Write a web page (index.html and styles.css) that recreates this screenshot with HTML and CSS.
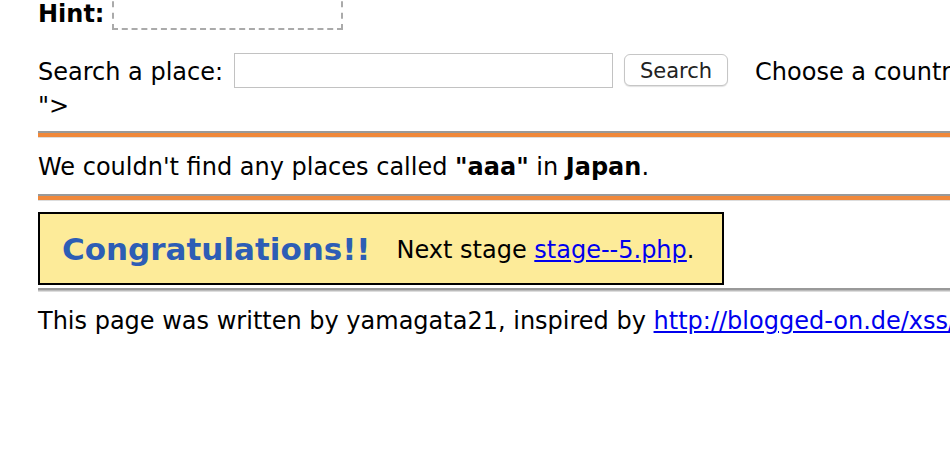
FILE: index.html
```html
<!DOCTYPE html>
<html>
<head>
<meta charset="utf-8">
<link rel="stylesheet" href="styles.css">
</head>
<body>
<div class="page">
  <div class="hint-row"><b class="hint-label">Hint:</b><span class="hint-box"></span></div>
  <form class="search-row">
    <span class="label">Search a place:</span>
    <input class="search-input" type="text">
    <button class="search-btn" type="button">Search</button>
    <span class="label country">Choose a country:</span>
  </form>
  <div class="stray">"&gt;</div>
  <hr class="rule-orange">
  <p class="result">We couldn't find any places called <b>"aaa"</b> in <b>Japan</b>.</p>
  <hr class="rule-orange">
  <div class="congrats"><span class="congrats-title">Congratulations!!</span><span class="congrats-next">Next stage <a href="#">stage--5.php</a>.</span></div>
  <hr class="rule-gray">
  <p class="footer">This page was written by yamagata21, inspired by <a href="#">http://blogged-on.de/xss/</a></p>
</div>
</body>
</html>
```
FILE: styles.css
```css
html, body {
  margin: 0;
  padding: 0;
  background: #fff;
  overflow: hidden;
}
body {
  width: 950px;
  height: 460px;
  font-family: "DejaVu Sans", Verdana, sans-serif;
  font-size: 24px;
  color: #000;
}
.page {
  padding-left: 38px;
  white-space: nowrap;
}
.hint-row {
  display: flex;
  align-items: flex-end;
  height: 30px;
}
.hint-label {
  padding-bottom: 2px;
  line-height: 28px;
}
.hint-box {
  display: inline-block;
  flex-shrink: 0;
  width: 231px;
  height: 40px;
  margin-left: 8px;
  border: 2px dashed #aaa;
  border-top: none;
  box-sizing: border-box;
}
.search-row {
  display: flex;
  align-items: center;
  height: 36px;
  margin: 22px 0 0;
}
.search-row > * {
  flex-shrink: 0;
}
.label {
  padding-top: 3px;
}
.search-input {
  width: 379px;
  height: 35px;
  box-sizing: border-box;
  margin: 0 0 0 11px;
  border: 1px solid #c2c2c2;
  padding: 0;
}
.search-btn {
  width: 104px;
  height: 32px;
  margin-left: 11px;
  background: #fff;
  border: 1px solid #c6c6c6;
  border-radius: 6px;
  box-shadow: 0 1px 1px rgba(0,0,0,0.12);
  font-family: "DejaVu Sans", Verdana, sans-serif;
  font-size: 21px;
  color: #222;
  padding: 2px 0 0;
}
.country {
  margin-left: 27px;
}
.stray {
  line-height: 28px;
  margin-top: 4px;
}
hr {
  margin: 0;
  width: 912px;
  box-sizing: border-box;
}
.rule-orange {
  height: 7px;
  border: none;
  border-top: 2px solid #999;
  border-bottom: 1px solid #ddd;
  background: #f0883a;
}
.stray + .rule-orange {
  margin-top: 11px;
}
.result {
  margin: 0;
  padding: 15px 0 13px;
  line-height: 28px;
}
.congrats {
  display: flex;
  align-items: center;
  width: 686px;
  height: 73px;
  box-sizing: border-box;
  margin-top: 11px;
  border: 2px solid #000;
  background: #fdeb99;
  padding-left: 22px;
}
.congrats-title {
  font-weight: bold;
  font-size: 31px;
  color: #2d5db5;
}
.congrats-next {
  margin-left: 26px;
  padding-top: 2px;
}
a {
  color: #0000ee;
  text-decoration: underline;
}
.rule-gray {
  height: 4px;
  border: none;
  border-top: 2px solid #999;
  border-bottom: 1px solid #ddd;
  background: #bbb;
  margin-top: 3px;
}
.footer {
  margin: 0;
  padding-top: 15px;
  line-height: 28px;
}
```
